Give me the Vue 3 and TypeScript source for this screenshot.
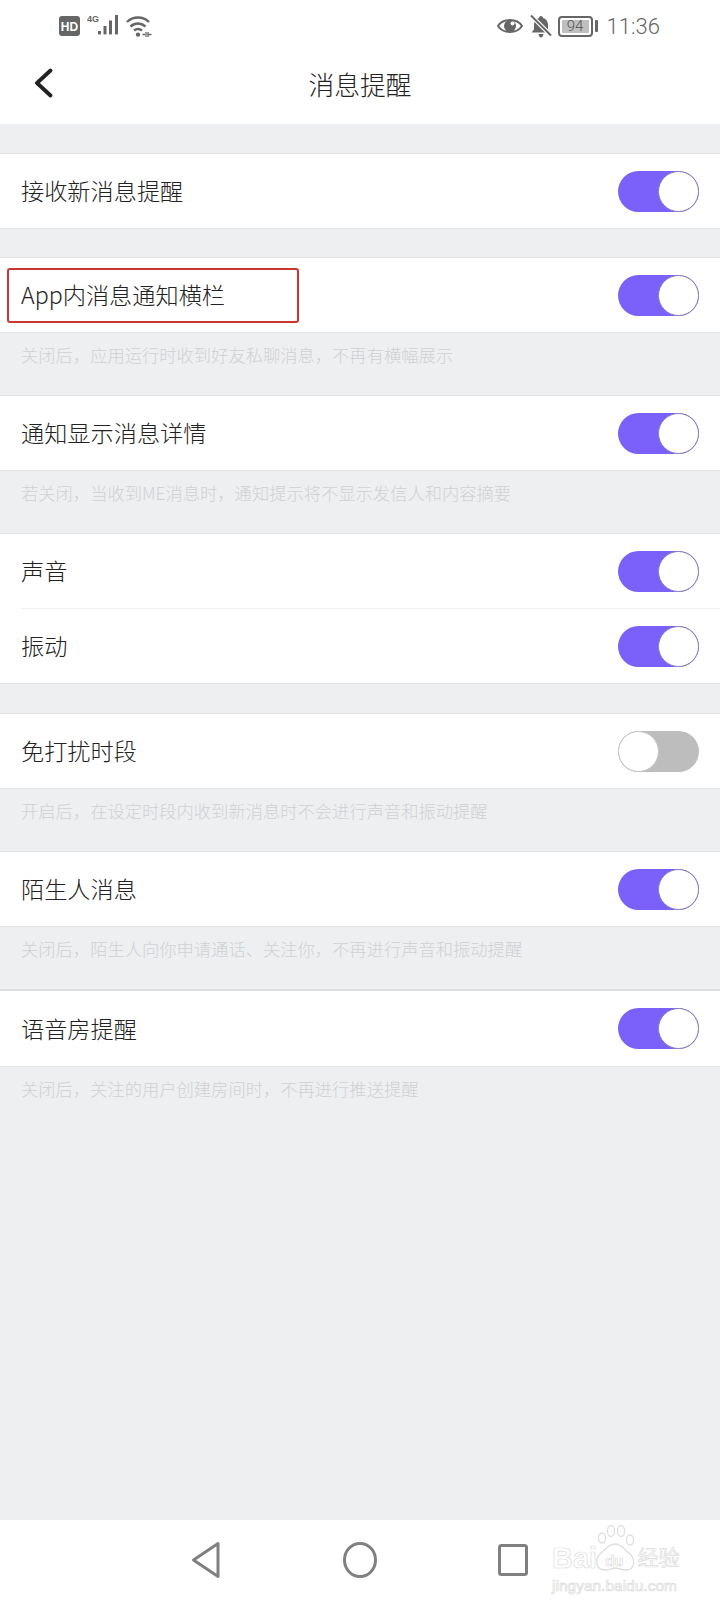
<template>
  <div class="page">
    <div class="status">
      <div class="status-left">
        <svg width="21" height="20" viewBox="0 0 21 20"><rect width="21" height="20" rx="3" fill="#666" /><text x="10.5" y="14.5" class="hd">HD</text></svg>
        <svg class="signal" width="34" height="24" viewBox="0 0 34 24">
          <text x="0" y="9" class="net">4G</text>
          <rect x="11" y="18" width="3" height="3.4" fill="#666" />
          <rect x="16.5" y="13" width="3" height="8.4" fill="#666" />
          <rect x="22" y="7.5" width="3" height="13.9" fill="#666" />
          <rect x="28" y="2" width="3" height="19.4" fill="#666" />
        </svg>
        <svg class="wifi" width="26" height="23" viewBox="0 0 26 23" fill="none" stroke="#666" stroke-width="2.4">
          <path d="M1 7 C7 1 17 1 23 7" />
          <path d="M4.5 11.5 C9 7.5 15 7.5 19.5 11.5" />
          <path d="M8 15.5 C10.5 13.5 13.5 13.5 16 15.5" />
          <circle cx="12" cy="19.6" r="2.2" fill="#666" stroke="none" />
          <path d="M16.5 19.5 H19 M20 17 V22 M22 17 V22 M22 19.5 H25.5" stroke-width="1.3" />
        </svg>
      </div>
      <div class="status-right">
        <svg width="26" height="18" viewBox="0 0 26 18">
          <path d="M1 9 C6 1 20 1 25 9 C20 17 6 17 1 9 Z" fill="none" stroke="#666" stroke-width="2" />
          <circle cx="13" cy="9" r="6" fill="#666" />
          <circle cx="15.5" cy="6.5" r="2" fill="#fff" />
        </svg>
        <svg class="bell" width="22" height="23" viewBox="0 0 22 23">
          <path d="M11 1 C12.4 1 13 2 13 3 C16.6 4 18 7 18 10 V14.5 L20.5 17.5 H1.5 L4 14.5 V10 C4 7 5.4 4 9 3 C9 2 9.6 1 11 1 Z" fill="#666" />
          <path d="M8.5 19 H13.5 C13.3 21 12.3 22.4 11 22.4 C9.7 22.4 8.7 21 8.5 19 Z" fill="#666" />
          <path d="M1 0.5 L21 20.5" stroke="#fff" stroke-width="4.4" />
          <path d="M1 0.5 L21 20.5" stroke="#666" stroke-width="2" />
        </svg>
        <div class="battery">
          <div class="cell"><span>94</span></div>
          <div class="nub"></div>
        </div>
        <span class="time">11:36</span>
      </div>
    </div>

    <div class="nav">
      <svg class="back" width="20" height="30" viewBox="0 0 20 30" fill="none" stroke="#222" stroke-width="3.8" stroke-linecap="round" stroke-linejoin="round">
        <path d="M16.5 2.5 L3 15 L16.5 27.5" />
      </svg>
      <span class="title">消息提醒</span>
    </div>

    <div class="groups">
      <section v-for="g in groups" :key="g.rows[0].label" class="group">
        <div class="card">
          <div v-for="r in g.rows" :key="r.label" class="row">
            <span class="label" :class="{ marked: r.marked }">{{ r.label }}</span>
            <span class="toggle" :class="{ off: r.off }"><i></i></span>
          </div>
        </div>
        <p v-if="g.hint" class="hint">{{ g.hint }}</p>
      </section>
    </div>

    <div class="bottom">
      <svg class="tri" width="30" height="38" viewBox="0 0 30 38" fill="none" stroke="#808080" stroke-width="3" stroke-linejoin="round">
        <path d="M27 2.5 L2.5 19 L27 35.5 Z" />
      </svg>
      <svg class="circ" width="34" height="36" viewBox="0 0 34 36" fill="none" stroke="#808080" stroke-width="3">
        <ellipse cx="17" cy="18" rx="15.5" ry="16.5" />
      </svg>
      <svg class="sq" width="30" height="32" viewBox="0 0 30 32" fill="none" stroke="#808080" stroke-width="3" stroke-linejoin="round">
        <rect x="1.5" y="1.5" width="27" height="29" rx="2" />
      </svg>
      <div class="mark">
        <svg class="paw" width="40" height="46" viewBox="0 0 40 46" fill="none" stroke="#dedede" stroke-width="1.3">
          <ellipse cx="7" cy="13" rx="3.6" ry="5" />
          <ellipse cx="16" cy="6" rx="3.6" ry="5.4" />
          <ellipse cx="26" cy="6" rx="3.6" ry="5.4" />
          <ellipse cx="35" cy="15" rx="3.6" ry="5" />
          <path d="M20 19 C14 19 11 24 6 28 C0 33 0 45 10 45 C15 45 17 43 20 43 C23 43 26 45 31 45 C40 45 41 34 34 28 C29 24 26 19 20 19 Z" />
        </svg>
        <div class="mark-top"><span>Bai</span><span class="du">du</span><span class="jy">经验</span></div>
        <div class="mark-url">jingyan.baidu.com</div>
      </div>
    </div>
  </div>
</template>

<script setup lang="ts">
interface Row {
  label: string;
  off?: boolean;
  marked?: boolean;
}
interface Group {
  rows: Row[];
  hint?: string;
}

const groups: Group[] = [
  { rows: [{ label: "接收新消息提醒" }] },
  {
    rows: [{ label: "App内消息通知横栏", marked: true }],
    hint: "关闭后，应用运行时收到好友私聊消息，不再有横幅展示",
  },
  {
    rows: [{ label: "通知显示消息详情" }],
    hint: "若关闭，当收到ME消息时，通知提示将不显示发信人和内容摘要",
  },
  { rows: [{ label: "声音" }, { label: "振动" }] },
  {
    rows: [{ label: "免打扰时段", off: true }],
    hint: "开启后，在设定时段内收到新消息时不会进行声音和振动提醒",
  },
  {
    rows: [{ label: "陌生人消息" }],
    hint: "关闭后，陌生人向你申请通话、关注你，不再进行声音和振动提醒",
  },
  {
    rows: [{ label: "语音房提醒" }],
    hint: "关闭后，关注的用户创建房间时，不再进行推送提醒",
  },
];
</script>

<style>
body {
  margin: 0;
}
</style>

<style scoped>
.page {
  width: 720px;
  height: 1600px;
  display: flex;
  flex-direction: column;
  background: #eeeff1;
  font-family: "Noto Sans CJK SC", "Noto Sans", sans-serif;
  color: #222;
  overflow: hidden;
}
.status {
  height: 52px;
  background: #fff;
  display: flex;
  justify-content: space-between;
  align-items: center;
  padding: 0 60px 0 59px;
  box-sizing: border-box;
}
.status-left,
.status-right {
  display: flex;
  align-items: center;
}
.hd {
  font: bold 12px "Liberation Sans", sans-serif;
  fill: #fff;
  text-anchor: middle;
}
.net {
  font: bold 9px "Liberation Sans", sans-serif;
  fill: #666;
}
.signal {
  margin-left: 7px;
  margin-top: -2px;
}
.wifi {
  margin-left: 5px;
}
.bell {
  margin-left: 7px;
}
.battery {
  display: flex;
  align-items: center;
  margin-left: 6px;
}
.cell {
  width: 35px;
  height: 21px;
  box-sizing: border-box;
  border: 2px solid #666;
  border-radius: 4px;
  padding: 2px;
  display: flex;
}
.cell span {
  flex: 1;
  background: #bfbfbf;
  border-radius: 1px;
  font: 300 15px/13px "Roboto", sans-serif;
  color: #555;
  text-align: center;
}
.nub {
  width: 3px;
  height: 12px;
  margin-left: 2px;
  background: #666;
  border-radius: 1px;
}
.time {
  margin-left: 9px;
  font: 300 22px "Roboto", sans-serif;
  color: #666;
}
.nav {
  height: 72px;
  background: #fff;
  display: flex;
  align-items: center;
  justify-content: center;
  position: relative;
}
.back {
  position: absolute;
  left: 34px;
  top: 16px;
}
.title {
  font-size: 25.8px;
  font-weight: 300;
  color: #222;
  margin-bottom: 9px;
}
.groups {
  flex: 1;
  padding-top: 29px;
}
.group {
  margin-bottom: 28px;
}
.group:has(.row + .row) {
  margin-bottom: 29px;
}
.group:has(.hint) {
  margin-bottom: 0;
}
.card {
  background: #fff;
  border-top: 1px solid #e2e3e5;
  border-bottom: 1px solid #e4e5e7;
}
.group:last-child .card {
  border-top: 2px solid #dcdddf;
}
.row {
  height: 74px;
  display: flex;
  align-items: center;
  justify-content: space-between;
  padding: 0 21px;
  position: relative;
}
.group:last-child .row {
  height: 75px;
}
.row + .row {
  margin-top: 1px;
}
.row + .row::before {
  content: "";
  position: absolute;
  left: 21px;
  right: 0;
  top: -1px;
  border-top: 1px solid #f0f1f2;
}
.label {
  font-size: 23.2px;
  font-weight: 300;
  color: #222;
  margin-top: -2px;
}
.marked::after {
  content: "";
  position: absolute;
  left: 7px;
  top: 10px;
  width: 292px;
  height: 55px;
  border: 2px solid #cb3530;
  border-radius: 3px;
  box-sizing: border-box;
}
.toggle {
  width: 81px;
  height: 41px;
  border-radius: 21px;
  background: #7b60fa;
  position: relative;
  display: block;
}
.toggle i {
  position: absolute;
  right: 0;
  top: 0;
  width: 41px;
  height: 41px;
  box-sizing: border-box;
  border: 1px solid #8a7fb5;
  border-radius: 50%;
  background: #fff;
}
.toggle.off {
  background: #bdbdbd;
}
.toggle.off i {
  right: auto;
  left: 0;
  border-color: #c4c4c4;
}
.hint {
  margin: 0;
  height: 62px;
  padding: 10px 21px 0;
  box-sizing: border-box;
  font-size: 17.3px;
  line-height: 24px;
  font-weight: 300;
  color: #d0d1d3;
  white-space: nowrap;
}
.bottom {
  height: 80px;
  flex: none;
  background: #fff;
  position: relative;
  display: flex;
  align-items: center;
}
.tri {
  margin-left: 191px;
}
.circ {
  margin-left: 122px;
}
.sq {
  margin-left: 121px;
}
.mark {
  position: absolute;
  left: 552px;
  top: 5px;
  width: 128px;
  color: transparent;
  -webkit-text-stroke: 0.7px #dcdcdc;
  font-family: "Liberation Sans", sans-serif;
}
.paw {
  position: absolute;
  left: 43px;
  top: 0;
}
.mark-top {
  margin-top: 16px;
  height: 34px;
  font-size: 29px;
  font-weight: bold;
  line-height: 34px;
  display: flex;
  white-space: nowrap;
  position: relative;
}
.du {
  font-size: 15px;
  margin-left: 8px;
  margin-top: 3px;
}
.jy {
  font-size: 21px;
  margin-left: 14px;
  margin-top: -2px;
  font-weight: normal;
  font-family: "Noto Sans CJK SC", sans-serif;
}
.mark-url {
  margin-top: 3px;
  font-size: 15.5px;
  line-height: 16px;
  white-space: nowrap;
}
</style>
